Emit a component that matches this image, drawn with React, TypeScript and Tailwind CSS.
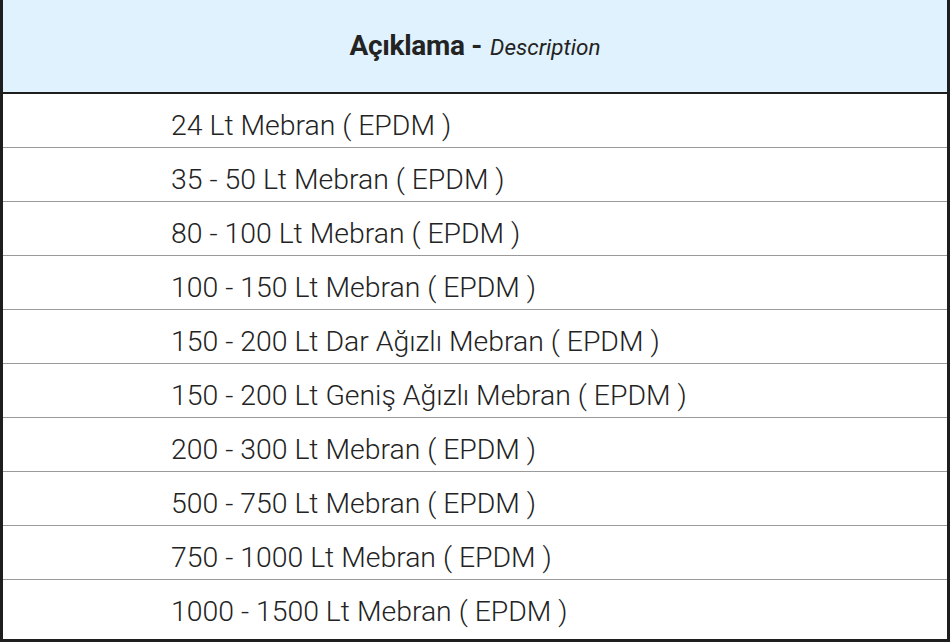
const rows = [
  "24 Lt Mebran ( EPDM )",
  "35 - 50 Lt Mebran ( EPDM )",
  "80 - 100 Lt Mebran ( EPDM )",
  "100 - 150 Lt Mebran ( EPDM )",
  "150 - 200 Lt Dar Ağızlı Mebran ( EPDM )",
  "150 - 200 Lt Geniş Ağızlı Mebran ( EPDM )",
  "200 - 300 Lt Mebran ( EPDM )",
  "500 - 750 Lt Mebran ( EPDM )",
  "750 - 1000 Lt Mebran ( EPDM )",
  "1000 - 1500 Lt Mebran ( EPDM )",
];

export default function App() {
  return (
    <div className="w-[950px] h-[642px] bg-white font-['Roboto',sans-serif] text-[#232323]">
      <div className="flex flex-col h-full border-x-[3px] border-b-[3px] border-[#1e1e1e]">
        <div className="h-[94px] shrink-0 bg-[#e0f2fd] border-b-2 border-[#1e1e1e] flex items-baseline justify-center pt-[25px]">
          <span className="text-[28px] font-bold tracking-[-0.3px]">Açıklama -</span>
          <span className="text-[22.5px] italic ml-[8px]">Description</span>
        </div>
        {rows.map((r, i) => (
          <div
            key={i}
            className={
              i < rows.length - 1
                ? "h-[54px] shrink-0 border-b border-[#9a9a9a] pl-[168px] pt-[15px] text-[28.4px] leading-[34px] font-light"
                : "flex-1 pl-[168px] pt-[15px] text-[28.4px] leading-[34px] font-light"
            }
          >
            {r}
          </div>
        ))}
      </div>
    </div>
  );
}
